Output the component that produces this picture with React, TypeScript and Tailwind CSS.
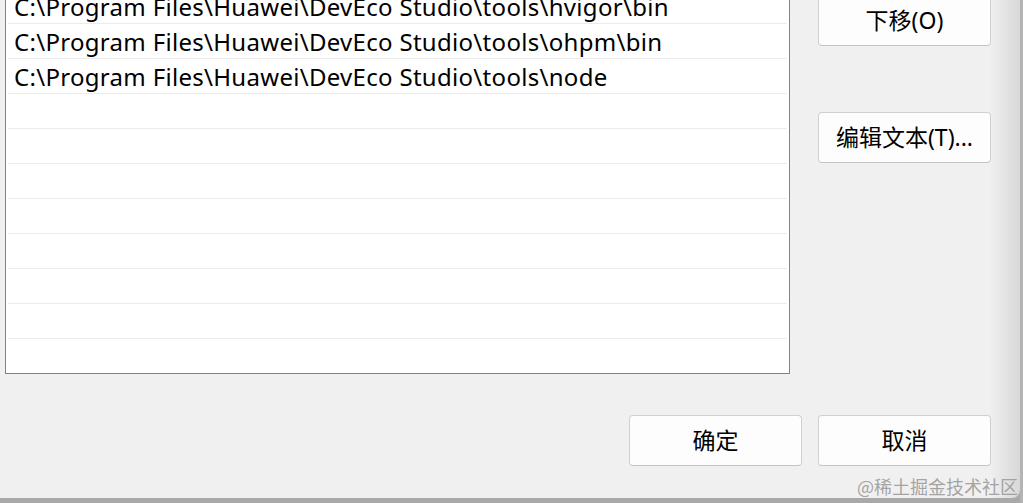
const paths = [
  'C:\\Program Files\\Huawei\\DevEco Studio\\tools\\hvigor\\bin',
  'C:\\Program Files\\Huawei\\DevEco Studio\\tools\\ohpm\\bin',
  'C:\\Program Files\\Huawei\\DevEco Studio\\tools\\node',
  '',
  '',
  '',
  '',
  '',
  '',
  '',
  '',
]

function DialogButton({ label, className = '' }: { label: string; className?: string }) {
  return (
    <button
      className={`w-[173px] h-[51px] shrink-0 flex items-center justify-center bg-[#fdfdfd] border border-[#d0d0d0] border-b-[#c4c4c4] rounded-[4px] text-[23px] text-black ${className}`}
      style={{ fontFamily: '"Noto Sans", "Noto Sans CJK SC", sans-serif' }}
    >
      {label}
    </button>
  )
}

export default function App() {
  return (
    <div className="w-[1023px] h-[503px] overflow-hidden bg-[#a9a9a9] flex">
      <div className="relative w-[1020px] h-[498px] shrink-0 overflow-hidden rounded-br-[8px] bg-[linear-gradient(to_right,#f0f0f0_97%,#d8d8d8)] flex flex-col">
        <div className="flex">
          <div
            className="ml-[5px] mt-[-12px] w-[785px] h-[386px] overflow-hidden bg-white border border-[#838383]"
            style={{ fontFamily: '"Noto Sans", "Noto Sans CJK SC", sans-serif' }}
          >
            {paths.map((p, i) => (
              <div key={i} className="mx-[2px] h-[35px] border-b border-[#ebebeb] flex items-center pl-[6px] pt-[1px] text-[24px] tracking-[0.3px] text-black whitespace-nowrap leading-none">
                {p}
              </div>
            ))}
          </div>
          <div className="ml-[28px] flex flex-col">
            <DialogButton label="下移(O)" className="mt-[-5px]" />
            <DialogButton label="编辑文本(T)..." className="mt-[66px]" />
          </div>
        </div>
        <div className="flex justify-end gap-[16px] mt-[41px] pr-[29px]">
          <DialogButton label="确定" />
          <DialogButton label="取消" />
        </div>
        <div
          className="absolute right-[2px] bottom-0 text-[18px] leading-[24px] text-[#9a9a9a]/90"
          style={{ fontFamily: '"Noto Sans CJK SC", sans-serif' }}
        >
          @稀土掘金技术社区
        </div>
      </div>
      <div className="flex-1 bg-[#b4b4b4]" />
    </div>
  )
}
